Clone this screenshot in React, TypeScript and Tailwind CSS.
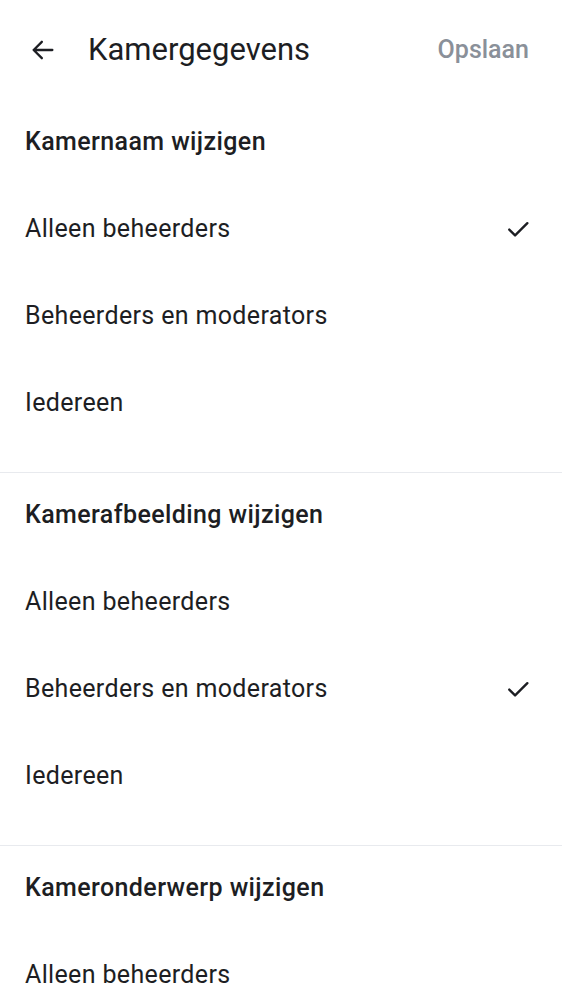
const sections = [
  { title: "Kamernaam wijzigen", selected: 0 },
  { title: "Kamerafbeelding wijzigen", selected: 1 },
  { title: "Kameronderwerp wijzigen", selected: -1 },
];

const options = ["Alleen beheerders", "Beheerders en moderators", "Iedereen"];

const Check = () => (
  <svg width="28" height="28" viewBox="0 0 24 24" fill="none" stroke="#1d1e23" strokeWidth="2" strokeLinecap="round" strokeLinejoin="round">
    <path d="M4.5 12.5l5 5L20 7" />
  </svg>
);

const App = () => {
  return (
    <div className="w-[562px] h-[1000px] overflow-hidden bg-white text-[#1d1e23] font-['Roboto',sans-serif]">
      {/* Top bar */}
      <div className="h-[100px] flex items-center pl-[29px] pr-[33px]">
        <svg width="28" height="28" viewBox="0 0 24 24" fill="none" stroke="#1d1e23" strokeWidth="2" strokeLinecap="round" strokeLinejoin="round">
          <path d="M20 12H4M11 5l-7 7 7 7" />
        </svg>
        <h1 className="ml-[31px] text-[31px] font-normal flex-1">Kamergegevens</h1>
        <button className="text-[25px] font-medium text-[#8a9099]">Opslaan</button>
      </div>

      {sections.map((s, i) => (
        <div key={s.title}>
          {i > 0 && <div className="h-px bg-[#e8eaee]" />}
          <div className="h-[84px] flex items-center px-[25px]">
            <h2 className="text-[25px] font-medium tracking-[0.4px]">{s.title}</h2>
          </div>
          {options.map((o, j) => (
            <div key={o} className="h-[87px] pt-[2px] flex items-center justify-between pl-[25px] pr-[30px]">
              <span className="text-[25px] tracking-[0.35px]">{o}</span>
              {s.selected === j && <Check />}
            </div>
          ))}
          <div className="h-[27px]" />
        </div>
      ))}
    </div>
  );
};

export default App;
